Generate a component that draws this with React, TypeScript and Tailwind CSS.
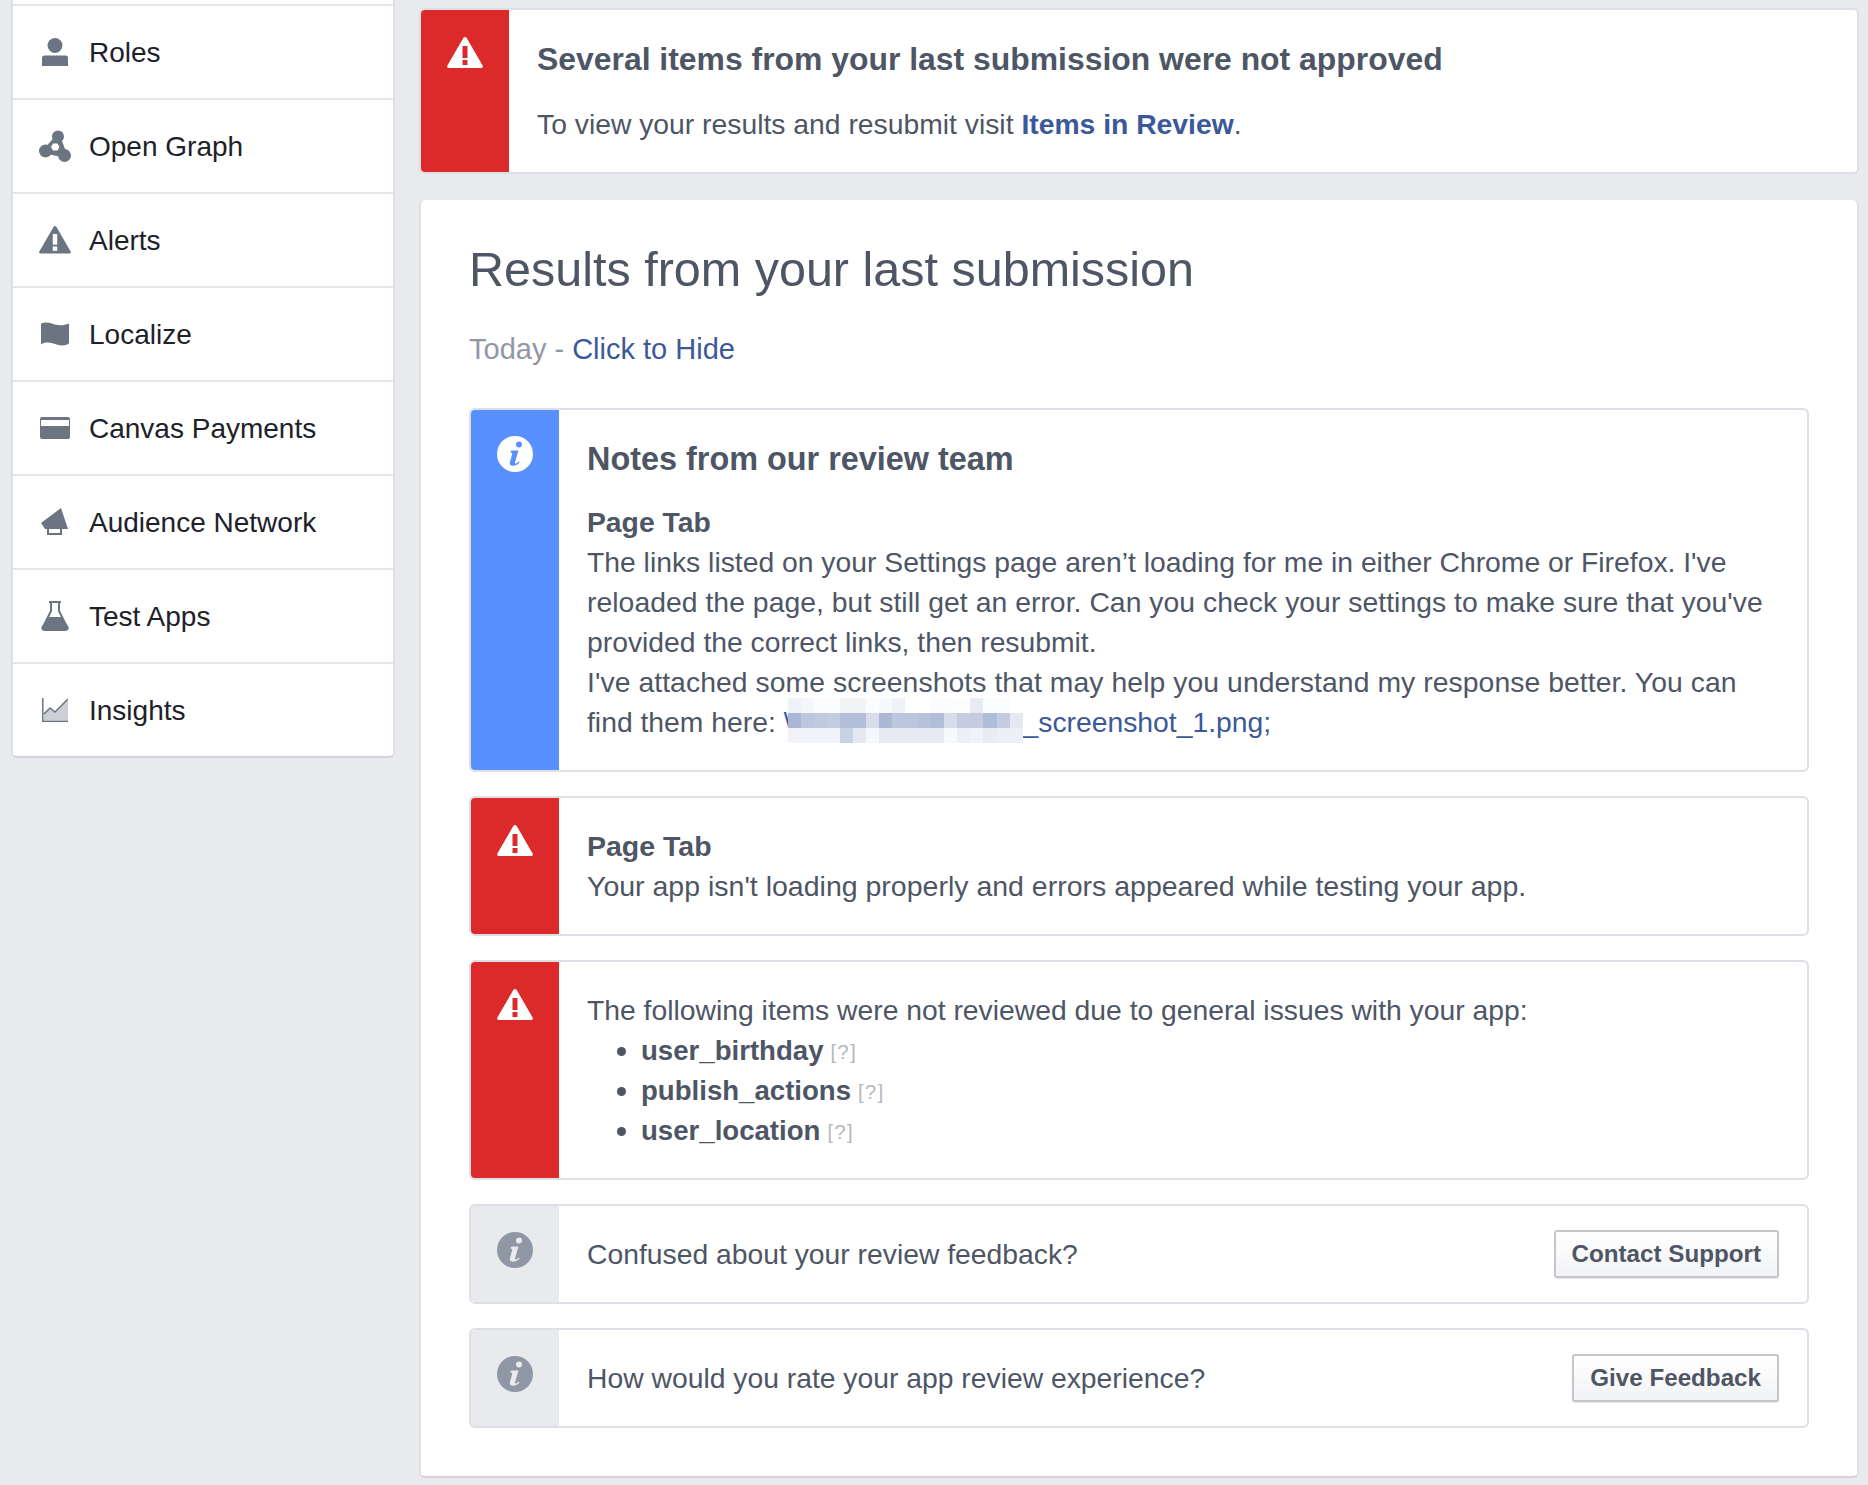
import type { ReactNode } from "react";

const iconColor = "#6b7582";
const linkClass = "text-[#3b5998]";

function RolesIcon() {
  return (
    <svg width="26" height="28" viewBox="0 0 26 28" fill={iconColor}>
      <circle cx="13" cy="7.500" r="7.500" />
      <path d="M0 20a2.500 2.500 0 0 1 2.500-2.500h21A2.500 2.500 0 0 1 26 20v8H0z" />
    </svg>
  );
}

function GraphIcon() {
  return (
    <svg width="32" height="32" viewBox="0 0 32 32" fill={iconColor}>
      <path d="M19 7 6.500 21l19 4z" stroke={iconColor} strokeWidth="5" strokeLinejoin="round" />
      <circle cx="19" cy="6.500" r="6" />
      <circle cx="6.500" cy="21" r="6.500" />
      <circle cx="25.500" cy="25.500" r="6.500" />
      <path fill="#fff" d="M14 13.500h4.500l2 3.500-2 3.500H14L12 17z" />
    </svg>
  );
}

function AlertIcon({ color = iconColor, mark = "#fff", width = 36 }: { color?: string; mark?: string; width?: number }) {
  return (
    <svg width={width} height={(width * 31) / 36} viewBox="0 0 36 31" preserveAspectRatio="none">
      <path fill={color} d="M18 0c.7 0 1.300.4 1.700 1l15.900 27.600c.7 1.100 0 2.400-1.400 2.400H1.800C.4 31-.3 29.700.4 28.600L16.300 1c.4-.6 1-1 1.700-1z" />
      <rect x="15.500" y="9" width="5" height="12" fill={mark} />
      <rect x="15.500" y="23" width="5" height="5" fill={mark} />
    </svg>
  );
}

function FlagIcon() {
  return (
    <svg width="28" height="24" viewBox="0 0 28 24" fill={iconColor}>
      <path d="M0 1.500C3 0 7 0 11 1.500s10 3 17 0V21c-1 1.500-3 2.500-7 2.500-5 0-9-3-14-3-3 0-5 .5-7 2z" />
    </svg>
  );
}

function CardIcon() {
  return (
    <svg width="30" height="22" viewBox="0 0 30 22">
      <rect width="30" height="22" rx="2" fill={iconColor} />
      <rect x="1" y="3" width="28" height="6" fill="#fff" />
    </svg>
  );
}

function MegaphoneIcon() {
  return (
    <svg width="28" height="28" viewBox="0 0 28 28" fill={iconColor}>
      <path d="M0 15 20 0l7 21H4z" />
      <path fill="none" stroke={iconColor} strokeWidth="2" d="M7 21v5h13v-5" />
    </svg>
  );
}

function FlaskIcon() {
  return (
    <svg width="28" height="30" viewBox="0 0 28 30">
      <path fill={iconColor} d="M8 16h12l7 9c1.500 2 .5 5-3 5H4c-3.500 0-4.500-3-3-5z" />
      <path fill="none" stroke={iconColor} strokeWidth="2" d="M8 1h12M10 1v9L3 24M18 1v9l7 14" />
    </svg>
  );
}

function ChartIcon() {
  return (
    <svg width="26" height="24" viewBox="0 0 26 24">
      <path fill="#ccd0d5" d="M2 15l6-5 5 4 13-13v21H2z" />
      <path fill="none" stroke={iconColor} strokeWidth="1.500" d="M.8 0v23.200H26M2 16l6-6 5 4L26 1" />
    </svg>
  );
}

function InfoIcon({ color, mark }: { color: string; mark: string }) {
  return (
    <svg width="36" height="36" viewBox="0 0 36 36">
      <circle cx="18" cy="18" r="18" fill={color} />
      <circle cx="22" cy="8.500" r="3" fill={mark} />
      <path
        fill={mark}
        d="M14.500 14.500h7l-3.600 12.300c-.2.800.6 1 1.300.6l2.600-1.900.7 1c-2 2.200-4 3.300-6.400 3.300-2.800 0-3.800-1.500-3.200-3.700l2.300-8.200c.2-.8-.3-1.200-1.100-1.200h-.9z"
      />
    </svg>
  );
}

const navItems: { label: string; icon: ReactNode }[] = [
  { label: "Roles", icon: <RolesIcon /> },
  { label: "Open Graph", icon: <GraphIcon /> },
  { label: "Alerts", icon: <AlertIcon width={32} /> },
  { label: "Localize", icon: <FlagIcon /> },
  { label: "Canvas Payments", icon: <CardIcon /> },
  { label: "Audience Network", icon: <MegaphoneIcon /> },
  { label: "Test Apps", icon: <FlaskIcon /> },
  { label: "Insights", icon: <ChartIcon /> },
];

function Sidebar() {
  return (
    <nav className="mt-[-2px] h-fit w-[384px] shrink-0 rounded-b-[6px] border-x-2 border-b-2 border-x-[#dfe0e4] border-b-[#d3d5da] bg-white pt-[6px]">
      {navItems.map((item) => (
        <div key={item.label} className="flex h-[94px] items-center border-t-2 border-[#e5e6e9] text-[28px] text-[#1d2129]">
          <div className="flex w-[76px] shrink-0 pl-[24px]">
            <div className="flex w-[36px] justify-center">{item.icon}</div>
          </div>
          <span className="pt-[2px]">{item.label}</span>
        </div>
      ))}
    </nav>
  );
}

type NoticeProps = {
  tone: "red" | "blue" | "gray";
  children: ReactNode;
  className?: string;
};

function Notice({ tone, children, className }: NoticeProps) {
  const rail =
    tone === "red"
      ? "bg-[#dc2a2a] pt-[27px]"
      : tone === "blue"
        ? "bg-[#5890ff] pt-[26px]"
        : "bg-[#e9eaed] pt-[26px]";
  return (
    <div className={`flex overflow-hidden rounded-[6px] border-2 border-[#dddfe4] bg-white ${className ?? ""}`}>
      <div className={`flex w-[88px] shrink-0 justify-center ${rail}`}>
        {tone === "red" && <AlertIcon color="#fff" mark="#dc2a2a" />}
        {tone === "blue" && <InfoIcon color="#fff" mark="#5890ff" />}
        {tone === "gray" && <InfoIcon color="#8f96a4" mark="#e9eaed" />}
      </div>
      <div className="min-w-0 flex-1 pl-[28px]">{children}</div>
    </div>
  );
}

const blurRows = [
  ["#eef1f7", "#f4f6fa", "#fbfcfd", "#fbfcfd", "#f3f4f6", "#f3f4f6", "#fbfcfd", "#f8f9fc", "#eef1f7", "#fff", "#fff", "#fbfcfd", "#fbfcfd", "#fdfdfe", "#e8ebf3", "#fbfcfd", "#fbfcfd", "#fff"],
  ["#a9b7d5", "#bcc6de", "#bfc9df", "#c3cce1", "#b3bfd9", "#b3bfd9", "#d6dcea", "#abb8d6", "#bcc6de", "#bcc6de", "#b6c1da", "#b1bed8", "#d6dcea", "#c3cce1", "#c3cce1", "#b0bdd8", "#c3cce1", "#e4e8f1"],
  ["#f1f3f8", "#f1f3f8", "#f1f3f8", "#f1f3f8", "#c9d1e4", "#e4e8f2", "#f6f7fb", "#e7eaf3", "#e7eaf3", "#e7eaf3", "#e7eaf3", "#e7eaf3", "#f8f9fb", "#eceff6", "#f1f3f8", "#e9ecf4", "#eceff6", "#eceff6"],
];

function PixelBlock() {
  return (
    <span className="relative inline-block h-[16px] w-[235px] align-baseline">
      <span className="absolute top-[-18px] left-0 flex w-[235px] flex-col">
        {blurRows.map((row, r) => (
          <span key={r} className="flex h-[15px]">
            {row.map((c, i) => (
              <span key={i} className="h-full flex-1" style={{ backgroundColor: c }} />
            ))}
          </span>
        ))}
      </span>
    </span>
  );
}

function Permission({ name }: { name: string }) {
  return (
    <li className="h-[40px]">
      <span className="text-[27.600px] font-bold">{name}</span>
      <span className="ml-[7px] align-[1px] text-[20px] tracking-[1.500px] text-[#b4b7bc]">[?]</span>
    </li>
  );
}

function CtaNotice({ text, button }: { text: string; button: string }) {
  return (
    <Notice tone="gray" className="h-[100px]">
      <div className="flex h-full items-center justify-between pr-[28px]">
        <span>{text}</span>
        <button className="flex h-[48px] items-center rounded-[3px] border-2 border-[#c4c6ca] bg-gradient-to-b from-white to-[#f2f3f5] px-[16px] text-[24.200px] font-bold text-[#4e5665] shadow-[0_1px_1px_rgba(0,0,0,0.1)]">
          {button}
        </button>
      </div>
    </Notice>
  );
}

export default function App() {
  return (
    <div className="flex h-[1485px] overflow-hidden bg-[#e9eaed] pl-[11px] text-[#4e5665] [font-family:'Liberation_Sans',Arial,sans-serif]">
      <Sidebar />
      <main className="ml-[24px] flex w-[1440px] flex-col pt-[8px]">
        <Notice tone="red" className="h-[166px] shrink-0">
          <div className="pt-[31px]">
            <h2 className="h-[36px] text-[31.900px] leading-[36px] font-bold">
              Several items from your last submission were not approved
            </h2>
            <p className="mt-[30px] text-[28.300px] leading-[34px]">
              To view your results and resubmit visit{" "}
              <a className={`font-bold ${linkClass}`}>Items in Review</a>.
            </p>
          </div>
        </Notice>

        <section className="mt-[26px] rounded-[6px] border-x-2 border-b-2 border-x-[#dfe0e4] border-b-[#d3d5da] bg-white px-[48px] pt-[39px] pb-[48px] text-[28.300px]">
          <h1 className="h-[60px] text-[48.500px] leading-[60px] font-normal">Results from your last submission</h1>
          <p className="mt-[30px] h-[40px] text-[29px] leading-[40px] text-[#9197a3]">
            Today - <a className={linkClass}>Click to Hide</a>
          </p>

          <Notice tone="blue" className="mt-[39px] h-[364px]">
            <div className="pt-[29px] leading-[40px]">
              <h3 className="h-[40px] text-[32.400px] font-bold">Notes from our review team</h3>
              <div className="mt-[23px] font-bold">Page Tab</div>
              <p>
                The links listed on your Settings page aren’t loading for me in either Chrome or Firefox. I've
                <br />
                <span className="tracking-[0.05px]">
                  reloaded the page, but still get an error. Can you check your settings to make sure that you've
                </span>
                <br />
                provided the correct links, then resubmit.
                <br />
                <span className="tracking-[0.08px]">
                  I've attached some screenshots that may help you understand my response better. You can
                </span>
                <br />
                find them here: <a className={linkClass}>\</a>
                <span className="ml-[-4px]">
                  <PixelBlock />
                </span>
                <a className={linkClass}>_screenshot_1.png</a>
                <span className={linkClass}>;</span>
              </p>
            </div>
          </Notice>

          <Notice tone="red" className="mt-[24px] h-[140px]">
            <div className="pt-[28px] text-[28.500px] leading-[40px]">
              <div className="font-bold">Page Tab</div>
              <p>Your app isn't loading properly and errors appeared while testing your app.</p>
            </div>
          </Notice>

          <Notice tone="red" className="mt-[24px] h-[220px]">
            <div className="pt-[28px] leading-[40px]">
              <p>The following items were not reviewed due to general issues with your app:</p>
              <ul className="list-disc pl-[54px] marker:text-[#4e5665]">
                <Permission name="user_birthday" />
                <Permission name="publish_actions" />
                <Permission name="user_location" />
              </ul>
            </div>
          </Notice>

          <div className="mt-[24px] flex flex-col gap-[24px]">
            <CtaNotice text="Confused about your review feedback?" button="Contact Support" />
            <CtaNotice text="How would you rate your app review experience?" button="Give Feedback" />
          </div>
        </section>
      </main>
    </div>
  );
}
